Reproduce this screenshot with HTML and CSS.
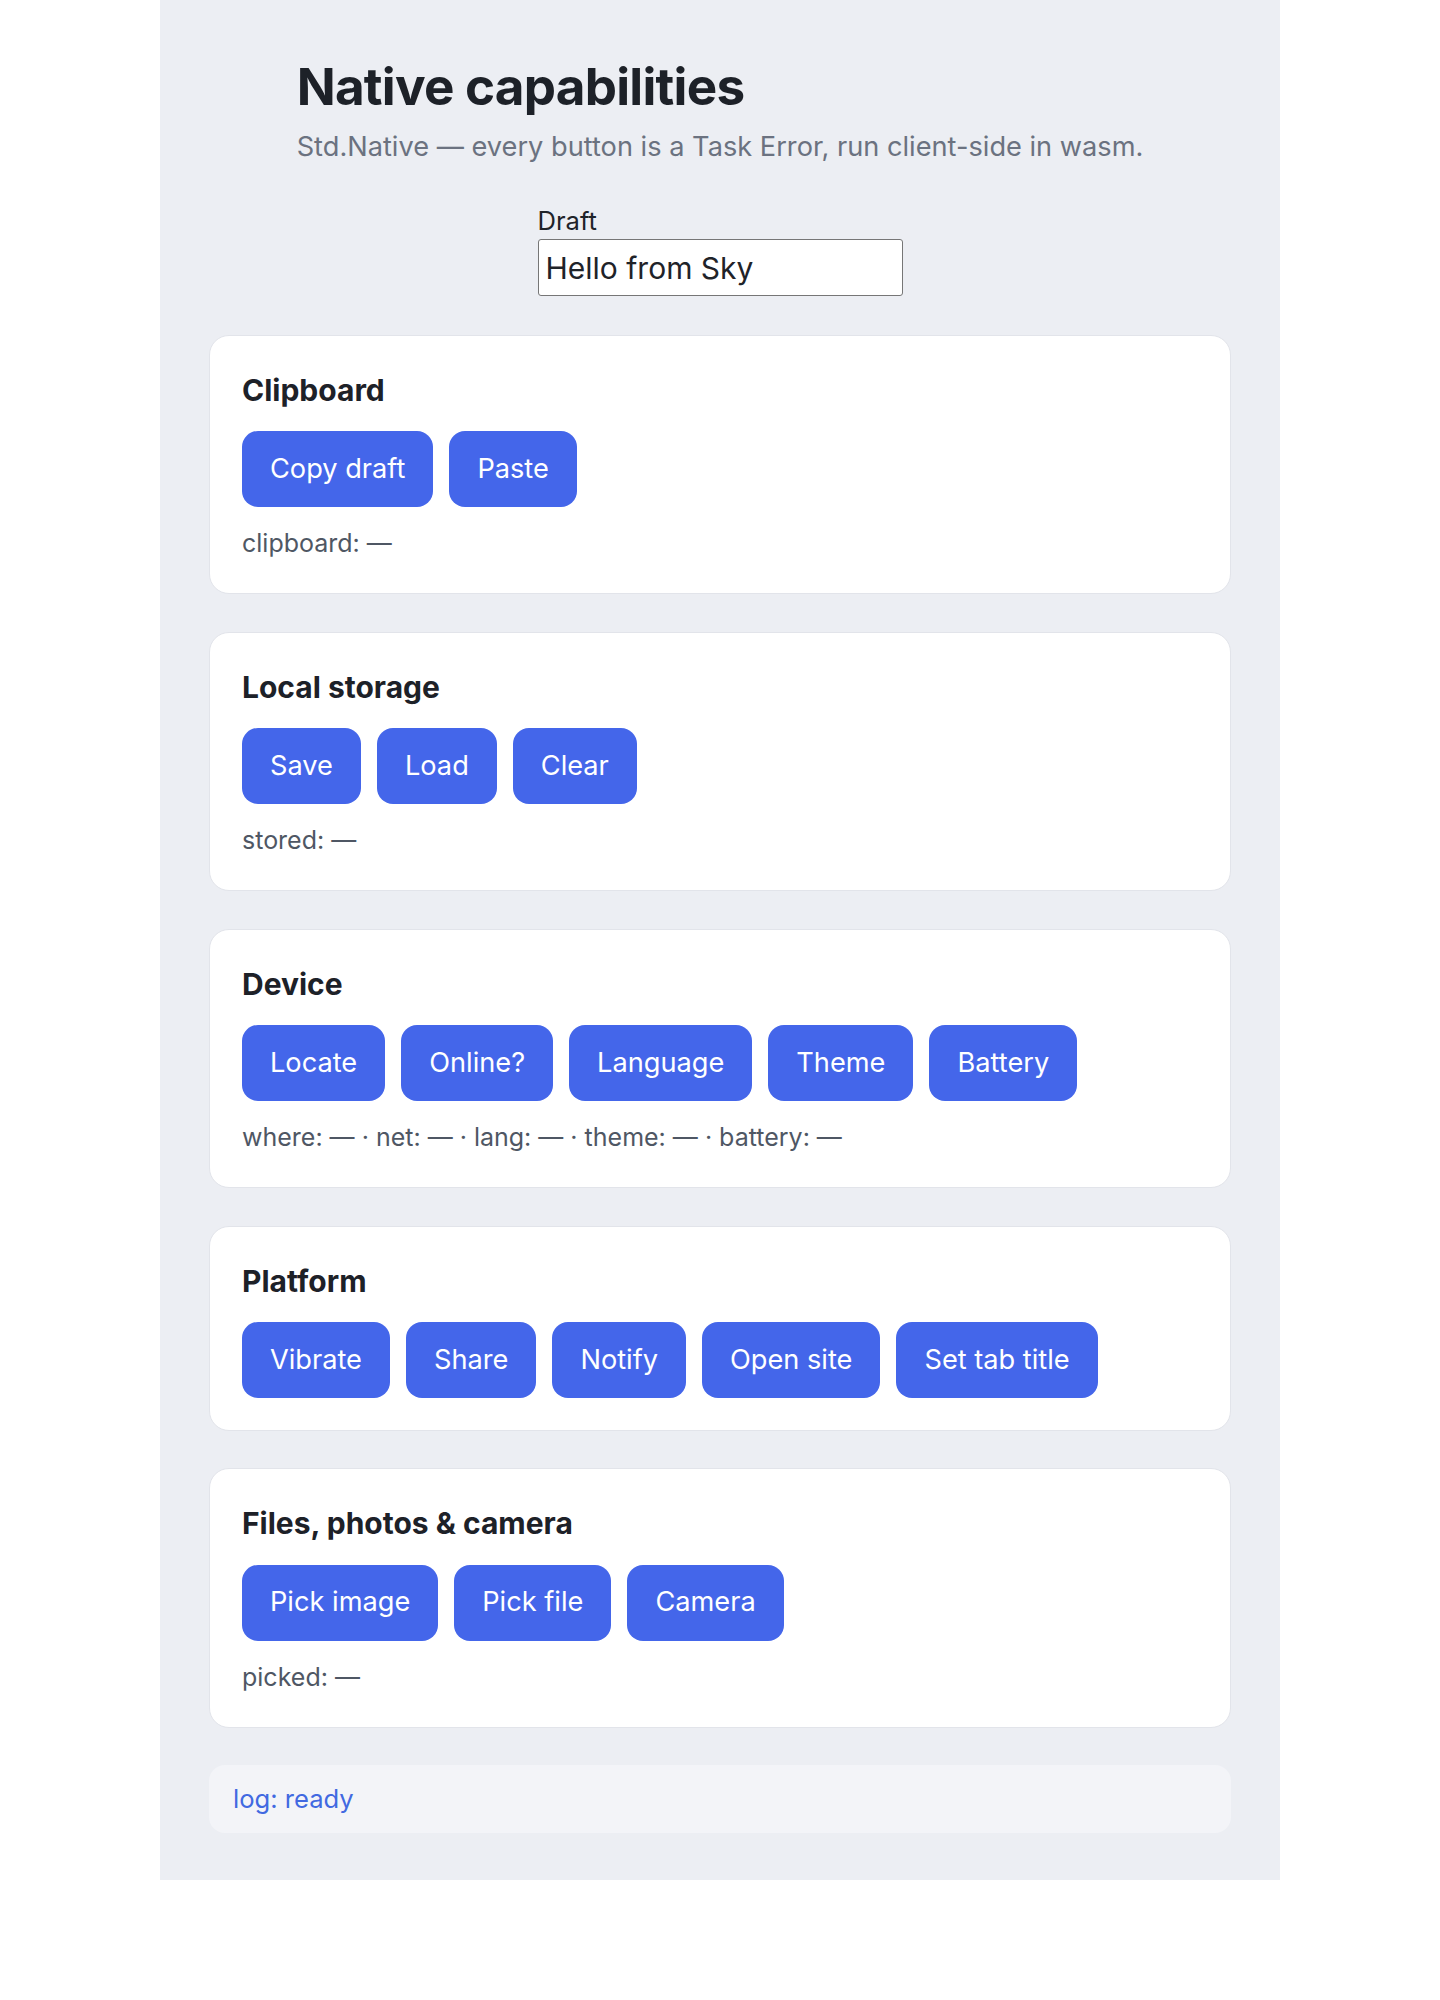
FILE: index.html
```html
<!DOCTYPE html>
<html lang="en">
<head>
<meta charset="utf-8">
<title>Native capabilities</title>
<link rel="stylesheet" href="styles.css">
</head>
<body>
<main class="page">
  <header class="intro">
    <h1 class="title">Native capabilities</h1>
    <p class="lede">Std.Native — every button is a Task Error, run client-side in wasm.</p>
  </header>

  <label class="field">
    <span class="field-label">Draft</span>
    <input class="field-input" type="text" value="Hello from Sky">
  </label>

  <section class="card">
    <h2 class="card-title">Clipboard</h2>
    <div class="actions">
      <button class="btn">Copy draft</button>
      <button class="btn">Paste</button>
    </div>
    <p class="status">clipboard: —</p>
  </section>

  <section class="card">
    <h2 class="card-title">Local storage</h2>
    <div class="actions">
      <button class="btn">Save</button>
      <button class="btn">Load</button>
      <button class="btn">Clear</button>
    </div>
    <p class="status">stored: —</p>
  </section>

  <section class="card">
    <h2 class="card-title">Device</h2>
    <div class="actions">
      <button class="btn">Locate</button>
      <button class="btn">Online?</button>
      <button class="btn">Language</button>
      <button class="btn">Theme</button>
      <button class="btn">Battery</button>
    </div>
    <p class="status">where: — · net: — · lang: — · theme: — · battery: —</p>
  </section>

  <section class="card">
    <h2 class="card-title">Platform</h2>
    <div class="actions">
      <button class="btn">Vibrate</button>
      <button class="btn">Share</button>
      <button class="btn">Notify</button>
      <button class="btn">Open site</button>
      <button class="btn">Set tab title</button>
    </div>
  </section>

  <section class="card">
    <h2 class="card-title">Files, photos &amp; camera</h2>
    <div class="actions">
      <button class="btn">Pick image</button>
      <button class="btn">Pick file</button>
      <button class="btn">Camera</button>
    </div>
    <p class="status">picked: —</p>
  </section>

  <div class="log">log: ready</div>
</main>
</body>
</html>
```

FILE: styles.css
```css
* { box-sizing: border-box; }

html, body {
  margin: 0;
  background: #ffffff;
}

body {
  font-family: Inter, "Noto Sans", "Liberation Sans", sans-serif;
  color: #1f2329;
}

.page {
  width: 1120px;
  margin: 0 auto;
  background: #eceef3;
  padding: 56px 49px 47px;
  display: flex;
  flex-direction: column;
  align-items: center;
}

.intro {
  display: flex;
  flex-direction: column;
}

.title {
  margin: 0;
  font-size: 51.2px;
  line-height: 61.4px;
  font-weight: 700;
  letter-spacing: -0.015em;
  color: #1d2128;
}

.lede {
  margin: 10px 0 0;
  font-size: 27.2px;
  line-height: 40px;
  color: #6b7280;
}

.field {
  margin-top: 39px;
  display: flex;
  flex-direction: column;
  gap: 2px;
}

.field-label {
  font-size: 25.6px;
  line-height: 30.7px;
  color: #1f2329;
}

.field-input {
  width: 365px;
  height: 57px;
  padding: 4px 7px;
  font-family: inherit;
  font-size: 30px;
  color: #1f2329;
  background: #ffffff;
  border: 1.5px solid #767676;
  border-radius: 3px;
}

.card {
  align-self: stretch;
  margin-top: 37.5px;
  background: #ffffff;
  border: 1px solid #e2e4ea;
  border-radius: 20px;
  padding: 32px;
  display: flex;
  flex-direction: column;
  gap: 19.2px;
}

.field + .card {
  margin-top: 39px;
}

.card-title {
  margin: 0;
  font-size: 30px;
  line-height: 44px;
  font-weight: 700;
  color: #1d2128;
}

.actions {
  display: flex;
  flex-wrap: wrap;
  gap: 16px;
}

.btn {
  font-family: inherit;
  font-size: 27.2px;
  line-height: 38.4px;
  padding: 18.8px 28px;
  color: #ffffff;
  background: #4466ea;
  border: none;
  border-radius: 16px;
  cursor: pointer;
}

.status {
  margin: 0;
  font-size: 25px;
  line-height: 35px;
  color: #4f5764;
}

.log {
  align-self: stretch;
  margin-top: 37.5px;
  background: #f3f4f8;
  border-radius: 16px;
  padding: 16px 24px;
  font-size: 25.6px;
  line-height: 36px;
  color: #4169e1;
}
```
